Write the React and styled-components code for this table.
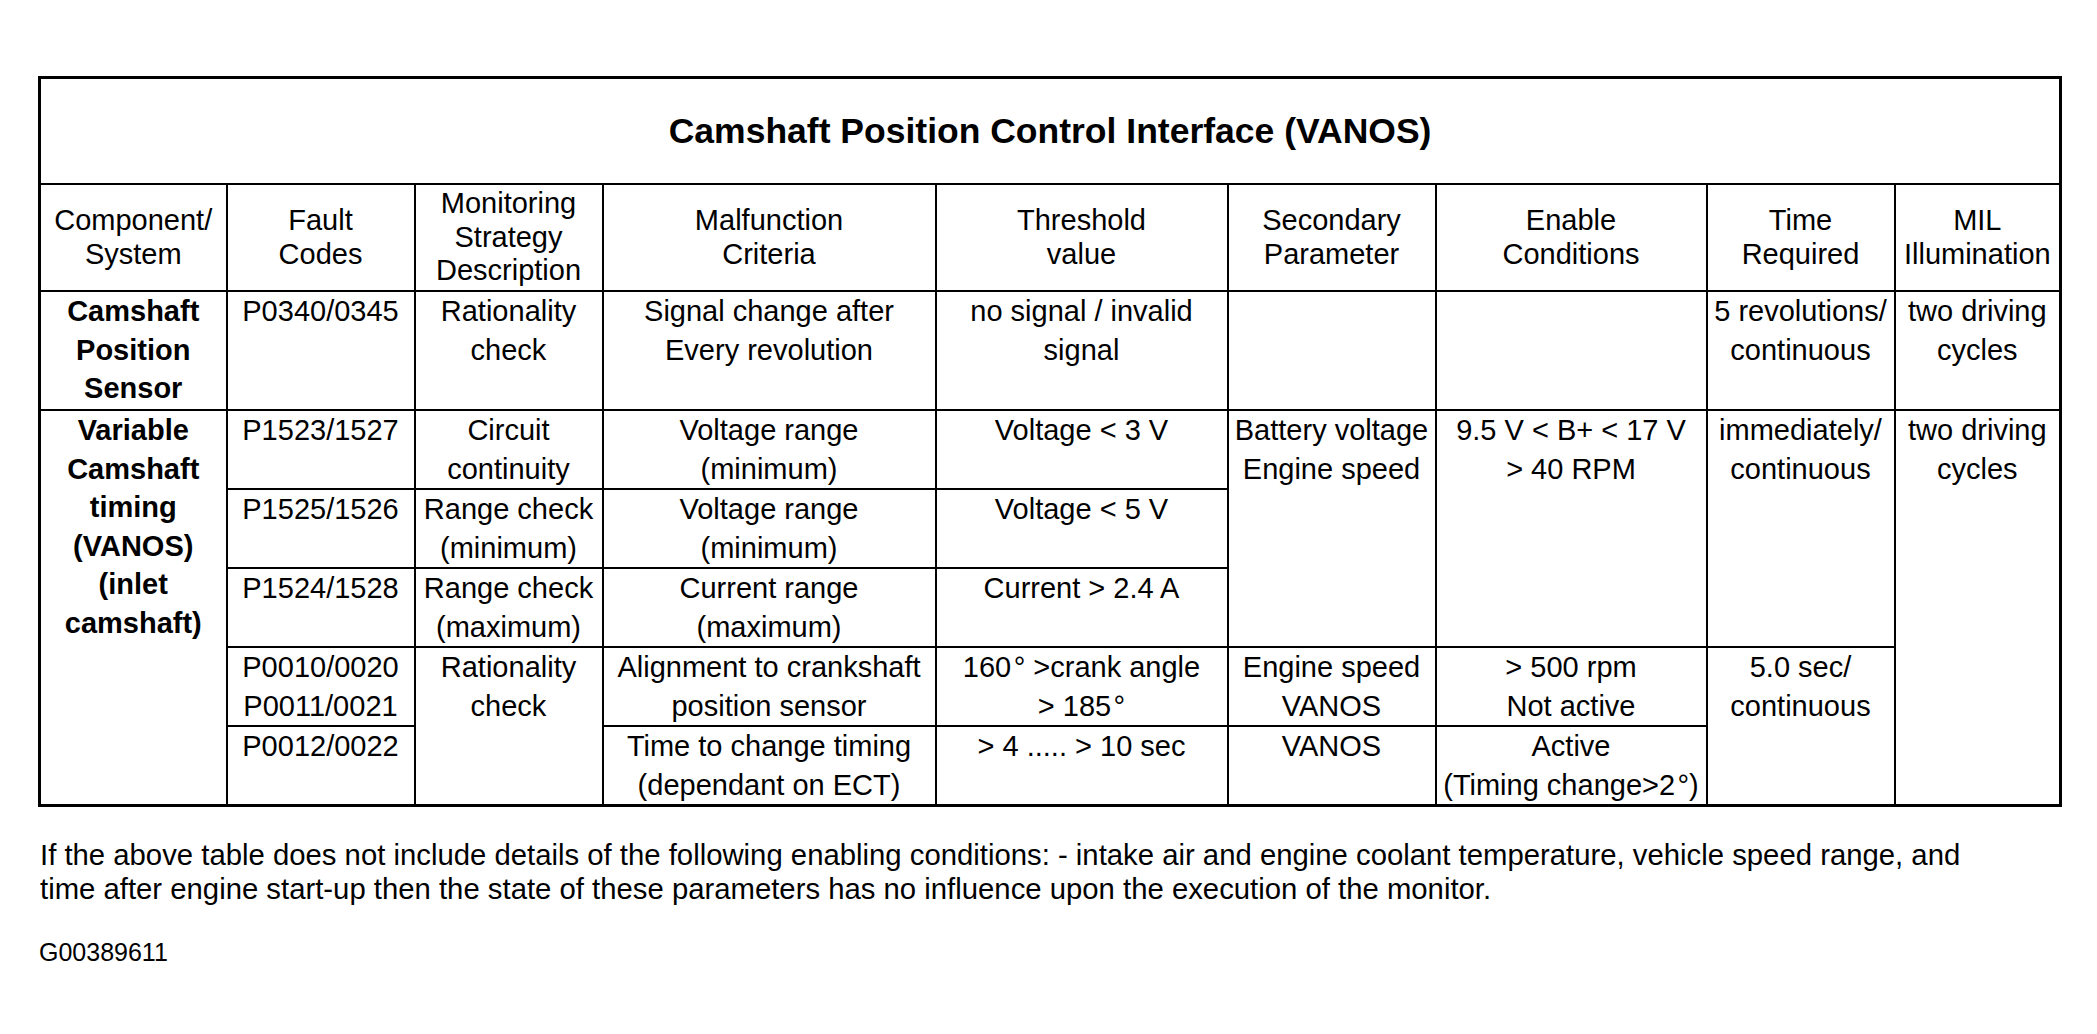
import React from 'react';
import styled, { createGlobalStyle } from 'styled-components';

const GlobalStyle = createGlobalStyle`
  html, body {
    margin: 0;
    padding: 0;
    background: #ffffff;
  }
  body {
    font-family: "Liberation Sans", Arial, Helvetica, sans-serif;
    color: #000000;
  }
`;

const Page = styled.div`
  width: 2097px;
  min-height: 1034px;
  padding: 76px 0 0 38px;
  box-sizing: border-box;
`;

const Sheet = styled.table`
  width: 2022px;
  border-collapse: collapse;
  table-layout: fixed;
  border: 3px solid #000000;
`;

const TitleCell = styled.th`
  height: 104px;
  padding: 0;
  font-size: 35.5px;
  font-weight: bold;
  text-align: center;
  vertical-align: middle;
  border-bottom: 2px solid #000000;
`;

const HeadCell = styled.th`
  height: 105px;
  padding: 0;
  font-size: 29px;
  font-weight: normal;
  line-height: 33.5px;
  text-align: center;
  vertical-align: middle;
  border: 2px solid #000000;
`;

const Cell = styled.td`
  height: ${(p) => p.$h || 77}px;
  padding: 0;
  font-size: 29px;
  font-weight: ${(p) => (p.$bold ? 'bold' : 'normal')};
  line-height: 38.5px;
  text-align: center;
  vertical-align: top;
  border: 2px solid #000000;
  white-space: nowrap;
`;

const Note = styled.p`
  margin: 31px 0 0 2px;
  font-size: 29.3px;
  line-height: 34px;
  white-space: nowrap;
`;

const DrawingId = styled.div`
  margin: 31px 0 0 1px;
  font-size: 25px;
  line-height: 30px;
`;

const widths = [187, 188, 188, 333, 292, 208, 271, 188, 166];

const headers = [
  ['Component/', 'System'],
  ['Fault', 'Codes'],
  ['Monitoring', 'Strategy', 'Description'],
  ['Malfunction', 'Criteria'],
  ['Threshold', 'value'],
  ['Secondary', 'Parameter'],
  ['Enable', 'Conditions'],
  ['Time', 'Required'],
  ['MIL', 'Illumination'],
];

const Lines = ({ lines }) =>
  lines.map((l, i) => (
    <React.Fragment key={i}>
      {i > 0 && <br />}
      {l}
    </React.Fragment>
  ));

export default function App() {
  return (
    <>
      <GlobalStyle />
      <Page>
        <Sheet>
          <colgroup>
            {widths.map((w, i) => (
              <col key={i} style={{ width: w }} />
            ))}
          </colgroup>
          <thead>
            <tr>
              <TitleCell colSpan={9}>Camshaft Position Control Interface (VANOS)</TitleCell>
            </tr>
            <tr>
              {headers.map((h, i) => (
                <HeadCell key={i}>
                  <Lines lines={h} />
                </HeadCell>
              ))}
            </tr>
          </thead>
          <tbody>
            <tr>
              <Cell $bold $h={117}>
                <Lines lines={['Camshaft', 'Position', 'Sensor']} />
              </Cell>
              <Cell $h={117}>P0340/0345</Cell>
              <Cell $h={117}>
                <Lines lines={['Rationality', 'check']} />
              </Cell>
              <Cell $h={117}>
                <Lines lines={['Signal change after', 'Every revolution']} />
              </Cell>
              <Cell $h={117}>
                <Lines lines={['no signal / invalid', 'signal']} />
              </Cell>
              <Cell $h={117} />
              <Cell $h={117} />
              <Cell $h={117}>
                <Lines lines={['5 revolutions/', 'continuous']} />
              </Cell>
              <Cell $h={117}>
                <Lines lines={['two driving', 'cycles']} />
              </Cell>
            </tr>
            <tr>
              <Cell $bold rowSpan={5}>
                <Lines
                  lines={['Variable', 'Camshaft', 'timing', '(VANOS)', '(inlet', 'camshaft)']}
                />
              </Cell>
              <Cell>P1523/1527</Cell>
              <Cell>
                <Lines lines={['Circuit', 'continuity']} />
              </Cell>
              <Cell>
                <Lines lines={['Voltage range', '(minimum)']} />
              </Cell>
              <Cell>Voltage &lt; 3 V</Cell>
              <Cell rowSpan={3}>
                <Lines lines={['Battery voltage', 'Engine speed']} />
              </Cell>
              <Cell rowSpan={3}>
                <Lines lines={['9.5 V < B+ < 17 V', '> 40 RPM']} />
              </Cell>
              <Cell rowSpan={3}>
                <Lines lines={['immediately/', 'continuous']} />
              </Cell>
              <Cell rowSpan={5}>
                <Lines lines={['two driving', 'cycles']} />
              </Cell>
            </tr>
            <tr>
              <Cell>P1525/1526</Cell>
              <Cell>
                <Lines lines={['Range check', '(minimum)']} />
              </Cell>
              <Cell>
                <Lines lines={['Voltage range', '(minimum)']} />
              </Cell>
              <Cell>Voltage &lt; 5 V</Cell>
            </tr>
            <tr>
              <Cell>P1524/1528</Cell>
              <Cell>
                <Lines lines={['Range check', '(maximum)']} />
              </Cell>
              <Cell>
                <Lines lines={['Current range', '(maximum)']} />
              </Cell>
              <Cell>Current &gt; 2.4 A</Cell>
            </tr>
            <tr>
              <Cell>
                <Lines lines={['P0010/0020', 'P0011/0021']} />
              </Cell>
              <Cell rowSpan={2}>
                <Lines lines={['Rationality', 'check']} />
              </Cell>
              <Cell>
                <Lines lines={['Alignment to crankshaft', 'position sensor']} />
              </Cell>
              <Cell>
                <Lines lines={['160\u200a\u00b0 >crank angle', '> 185\u200a\u00b0']} />
              </Cell>
              <Cell>
                <Lines lines={['Engine speed', 'VANOS']} />
              </Cell>
              <Cell>
                <Lines lines={['> 500 rpm', 'Not active']} />
              </Cell>
              <Cell rowSpan={2}>
                <Lines lines={['5.0 sec/', 'continuous']} />
              </Cell>
            </tr>
            <tr>
              <Cell>P0012/0022</Cell>
              <Cell>
                <Lines lines={['Time to change timing', '(dependant on ECT)']} />
              </Cell>
              <Cell>&gt; 4 ..... &gt; 10 sec</Cell>
              <Cell>VANOS</Cell>
              <Cell>
                <Lines lines={['Active', '(Timing change>2\u200a\u00b0)']} />
              </Cell>
            </tr>
          </tbody>
        </Sheet>
        <Note>
          If the above table does not include details of the following enabling conditions: - intake
          air and engine coolant temperature, vehicle speed range, and
          <br />
          time after engine start-up then the state of these parameters has no influence upon the
          execution of the monitor.
        </Note>
        <DrawingId>G00389611</DrawingId>
      </Page>
    </>
  );
}
